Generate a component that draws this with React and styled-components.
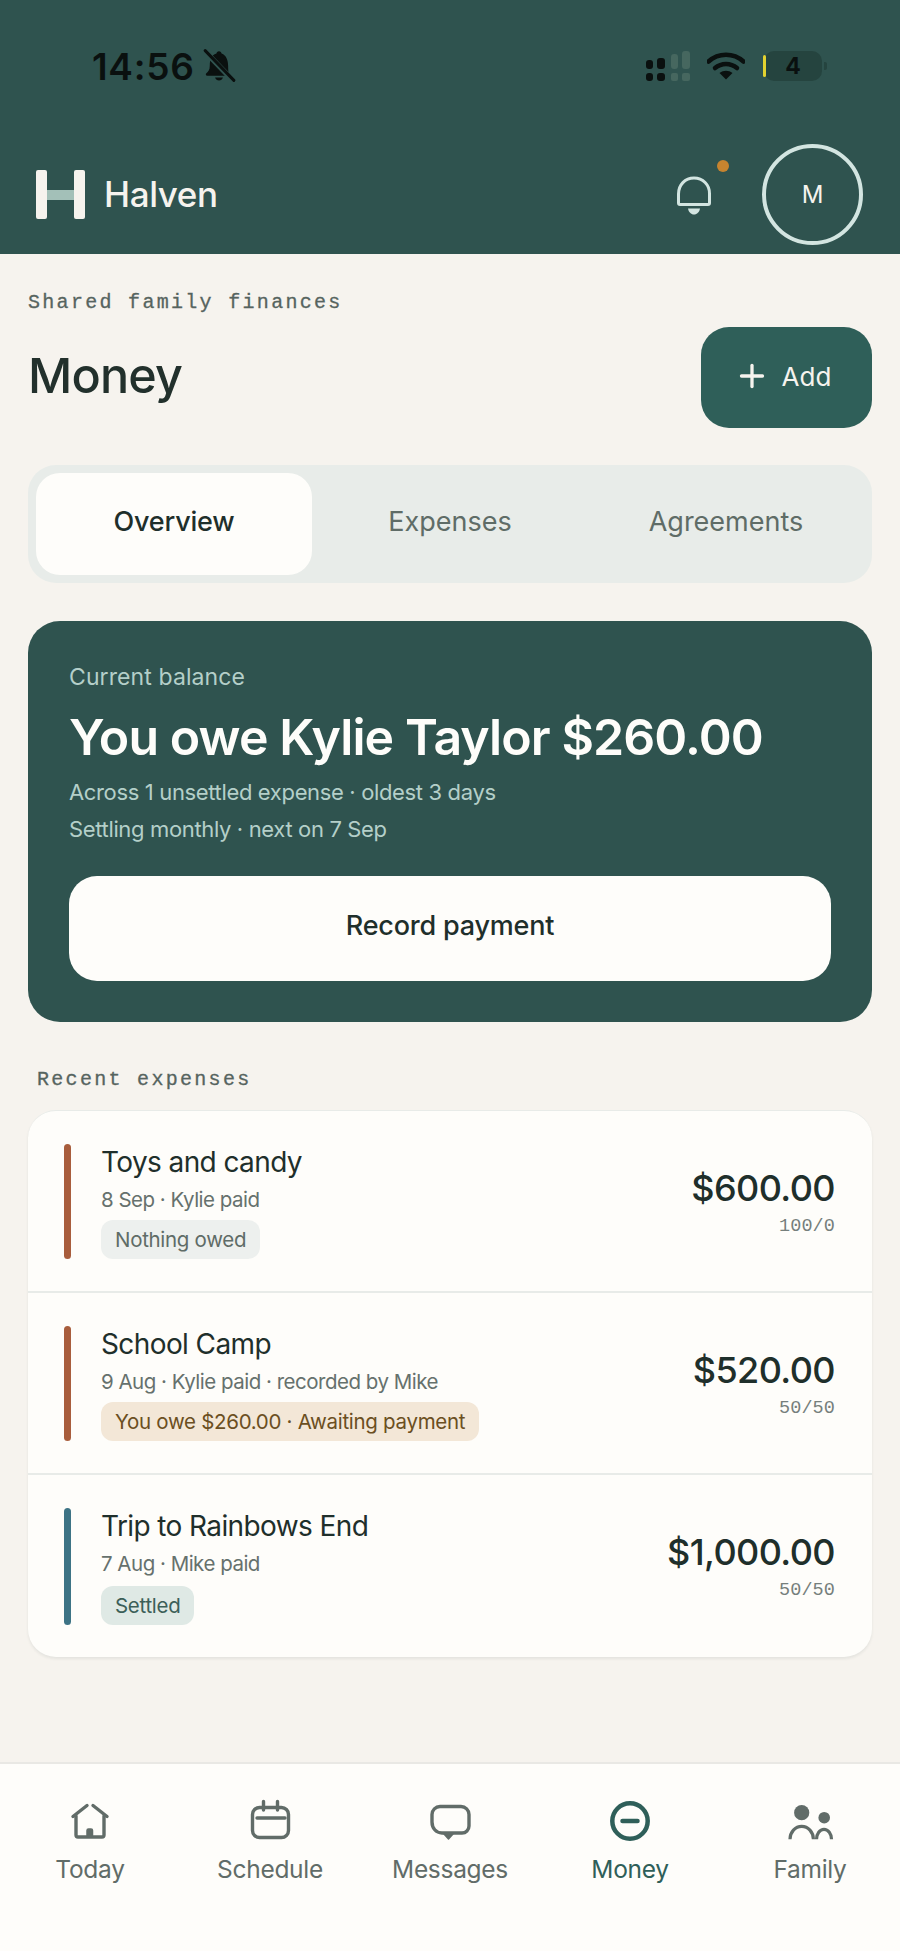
import styled, { createGlobalStyle } from "styled-components";
import { Plus } from "lucide-react";

const GlobalStyle = createGlobalStyle`
  * { box-sizing: border-box; }
  html, body { margin: 0; padding: 0; }
  body { background: #f6f3ee; font-family: Inter, "Liberation Sans", sans-serif; }
`;

const Page = styled.div`
  width: 900px;
  height: 1951px;
  display: flex;
  flex-direction: column;
  background: #f6f3ee;
  color: #1f2f2b;
  overflow: hidden;
`;

const Header = styled.header`
  height: 254px;
  flex: none;
  background: #2f534f;
  padding: 45px 37px 9px 36px;
  display: flex;
  flex-direction: column;
  justify-content: space-between;
`;

const StatusBar = styled.div`
  display: flex;
  align-items: center;
  justify-content: space-between;
  padding: 0 41px 0 56px;
  height: 42px;
`;

const StatusGroup = styled.div`
  display: flex;
  align-items: center;
  gap: ${(p) => p.$gap}px;
`;

const Clock = styled.span`
  font-size: 37px;
  font-weight: 600;
  letter-spacing: 0.7px;
  color: #0a100f;
`;

const Battery = styled.div`
  position: relative;
  width: 58px;
  height: 30px;
  margin-left: 2px;
  border-radius: 10px;
  background: #25443f;
  display: flex;
  align-items: center;
  justify-content: center;
  font-size: 23px;
  font-weight: 700;
  color: #0a100f;

  &::before {
    content: "";
    position: absolute;
    left: -1px;
    top: 4px;
    width: 3px;
    height: 22px;
    border-radius: 2px;
    background: #e3d230;
  }

  &::after {
    content: "";
    position: absolute;
    right: -5px;
    top: 11px;
    width: 3px;
    height: 8px;
    border-radius: 0 2px 2px 0;
    background: #25443f;
  }
`;

const AppBar = styled.div`
  display: flex;
  align-items: center;
  justify-content: space-between;
`;

const Brand = styled.div`
  display: flex;
  align-items: center;
  gap: 19px;
`;

const BrandName = styled.span`
  font-size: 35px;
  font-weight: 500;
  letter-spacing: -0.4px;
  padding-bottom: 2px;
  color: #f6f3ee;
`;

const AppActions = styled.div`
  display: flex;
  align-items: center;
  gap: 50px;
`;

const BellWrap = styled.div`
  position: relative;
  width: 36px;
  height: 40px;
  margin-top: 3px;
`;

const BellDot = styled.span`
  position: absolute;
  top: -16px;
  right: -17px;
  width: 12px;
  height: 12px;
  border-radius: 50%;
  background: #c6842f;
`;

const Avatar = styled.div`
  width: 101px;
  height: 101px;
  border-radius: 50%;
  border: 4px solid #d3e5e1;
  display: flex;
  align-items: center;
  justify-content: center;
  font-size: 24px;
  font-weight: 400;
  color: #f6f3ee;
`;

const Main = styled.main`
  flex: 1;
  padding: 37px 28px 0;
`;

const MonoLabel = styled.div`
  font-family: "Liberation Mono", monospace;
  font-size: 20px;
  letter-spacing: 2.3px;
  line-height: 24px;
  color: #56645f;
  -webkit-text-stroke: 0.3px #56645f;
`;

const TitleRow = styled.div`
  display: flex;
  align-items: center;
  justify-content: space-between;
  margin-top: 12px;
`;

const Title = styled.h1`
  margin: 0;
  padding-bottom: 4px;
  font-size: 48.5px;
  font-weight: 550;
  letter-spacing: -0.8px;
  color: #22302c;
`;

const AddButton = styled.button`
  width: 171px;
  height: 101px;
  border: 0;
  padding: 0 8px 3px 0;
  border-radius: 28px;
  background: #2f5f59;
  color: #f6f3ee;
  display: flex;
  align-items: center;
  justify-content: center;
  gap: 12px;
  font-family: inherit;
  font-size: 26px;
  font-weight: 400;
`;

const Tabs = styled.div`
  margin-top: 37px;
  height: 118px;
  padding: 8px;
  border-radius: 28px;
  background: #e8ece9;
  display: grid;
  grid-template-columns: repeat(3, 1fr);
`;

const Tab = styled.div`
  display: flex;
  align-items: center;
  justify-content: center;
  padding-bottom: 5px;
  border-radius: 24px;
  font-size: 27px;
  font-weight: ${(p) => (p.$active ? 500 : 400)};
  letter-spacing: ${(p) => (p.$active ? "-0.2px" : "0")};
  background: ${(p) => (p.$active ? "#fefdfa" : "transparent")};
  color: ${(p) => (p.$active ? "#1f2f2b" : "#5f6c67")};
`;

const BalanceCard = styled.section`
  margin-top: 38px;
  height: 401px;
  padding: 41px;
  border-radius: 32px;
  background: #2f534f;
  display: flex;
  flex-direction: column;
`;

const BalanceLabel = styled.div`
  font-size: 23px;
  line-height: 30px;
  letter-spacing: 0.1px;
  color: #b4cfc9;
`;

const BalanceAmount = styled.div`
  margin: 16px 0 8px;
  font-size: 50px;
  line-height: 58px;
  font-weight: 600;
  letter-spacing: -0.9px;
  color: #fefdfa;
`;

const BalanceNote = styled.div`
  font-size: 22px;
  line-height: 37px;
  letter-spacing: -0.35px;
  color: #b4cfc9;
`;

const RecordButton = styled.button`
  margin-top: auto;
  height: 105px;
  border: 0;
  padding: 0 0 6px;
  border-radius: 28px;
  background: #fefdfa;
  color: #1f2f2b;
  font-family: inherit;
  font-size: 27px;
  font-weight: 500;
  letter-spacing: -0.2px;
`;

const SectionHead = styled.div`
  margin-top: 46px;
  padding-left: 9px;
`;

const ExpenseList = styled.section`
  margin-top: 18px;
  border-radius: 28px;
  background: #fefdfa;
  border-top: 1px solid #e8ebe8;
  box-shadow: 0 2px 3px rgba(30, 50, 45, 0.08);
`;

const ExpenseRow = styled.article`
  height: 182px;
  padding: 33px 37px 32px 36px;
  display: flex;
  align-items: stretch;
  border-bottom: ${(p) => (p.$last ? "0" : "2px solid #e8ebe8")};
`;

const Accent = styled.span`
  flex: none;
  width: 7px;
  border-radius: 4px;
  background: ${(p) => p.$color};
  margin-right: 30px;
`;

const ExpenseInfo = styled.div`
  flex: 1;
  display: flex;
  flex-direction: column;
  align-items: flex-start;
`;

const ExpenseTitle = styled.div`
  font-size: 28px;
  line-height: 36px;
  letter-spacing: -0.6px;
  color: #1f2f2b;
`;

const ExpenseMeta = styled.div`
  margin-top: 5px;
  font-size: 20.5px;
  line-height: 30px;
  letter-spacing: -0.5px;
  color: #66716d;
`;

const StatusPill = styled.span`
  margin-top: auto;
  height: 39px;
  padding: 0 14px;
  border-radius: 12px;
  display: inline-flex;
  align-items: center;
  font-size: 20.5px;
  letter-spacing: -0.3px;
  background: ${(p) => p.$bg};
  color: ${(p) => p.$fg};
`;

const ExpenseSide = styled.div`
  display: flex;
  flex-direction: column;
  align-items: flex-end;
  padding-top: 22px;
`;

const Amount = styled.div`
  font-size: 36px;
  line-height: 44px;
  font-weight: 500;
  letter-spacing: -0.6px;
  color: #1f2f2b;
`;

const Split = styled.div`
  margin-top: 6px;
  font-family: "Liberation Mono", monospace;
  font-size: 18.5px;
  line-height: 22px;
  letter-spacing: 0.1px;
  color: #767f7c;
`;

const BottomNav = styled.nav`
  flex: none;
  height: 189px;
  background: #fefdfa;
  border-top: 2px solid #e9e8e4;
  padding-top: 34px;
  display: grid;
  grid-template-columns: repeat(5, 180px);
  align-content: start;
`;

const NavItem = styled.div`
  display: flex;
  flex-direction: column;
  align-items: center;
  gap: 6px;
  font-size: 24.5px;
  line-height: 34px;
  letter-spacing: -0.3px;
  color: ${(p) => (p.$active ? "#2f5f59" : "#616c68")};
`;

const NavIcon = styled.svg`
  width: 48px;
  height: 48px;
  display: block;
  fill: none;
  stroke: currentColor;
  stroke-width: ${(p) => p.$stroke || 3.4};
  stroke-linecap: round;
  stroke-linejoin: round;
`;

const MutedBell = () => (
  <svg width="34" height="34" viewBox="0 0 32 32">
    <path d="M16 2c-1.400 0-2.300.9-2.400 2.200-1.600.4-2.900 1.300-3.800 2.400L25 21.800c-.3-1.500-.4-3.400-.4-5.800 0-5-1.500-10.300-6.200-11.800C18.300 2.900 17.400 2 16 2z" fill="#0a100f" />
    <path d="M7.800 10.500c-.4 1.600-.5 3.500-.5 5.500 0 3.800-1.500 5.500-3.200 6.800-1 .8-.5 2.400.8 2.400H22z" fill="#0a100f" />
    <path d="M12.300 26.800c.5 1.700 2 2.900 3.700 2.900s3.200-1.200 3.700-2.900z" fill="#0a100f" />
    <path d="M3 2.500l26 27" stroke="#2f534f" strokeWidth="5" />
    <path d="M3 1.500l27 28" stroke="#0a100f" strokeWidth="2.800" strokeLinecap="round" />
  </svg>
);

const SignalIcon = () => (
  <svg width="44" height="32" viewBox="0 0 44 32">
    <g fill="#0a100f">
      <rect x="0" y="10" width="7" height="9" rx="3" />
      <rect x="0" y="23" width="7" height="8" rx="3" />
      <rect x="11" y="8" width="8" height="11" rx="3" />
      <rect x="11" y="23" width="8" height="8" rx="3" />
    </g>
    <g fill="#46675f">
      <rect x="25" y="4" width="7" height="15" rx="3" />
      <rect x="25" y="23" width="7" height="8" rx="2" />
      <rect x="36" y="1" width="8" height="18" rx="3" />
      <rect x="36" y="23" width="8" height="8" rx="2" />
    </g>
  </svg>
);

const WifiIcon = () => (
  <svg width="38" height="28" viewBox="0 0 38 28">
    <path d="M1.500 9.500C11.500 .5 26.500 .5 36.500 9.500" fill="none" stroke="#0a100f" strokeWidth="4.500" strokeLinecap="round" />
    <path d="M8 16c6.500-5.500 15.500-5.500 22 0" fill="none" stroke="#0a100f" strokeWidth="4.500" strokeLinecap="round" />
    <path d="M12.500 21c4-3 9-3 13 0l-6.500 6.500z" fill="#0a100f" />
  </svg>
);

const LogoMark = () => (
  <svg width="49" height="49" viewBox="0 0 49 49">
    <rect x="10" y="20" width="30" height="10" fill="#a3c0b8" />
    <rect x="0" y="0" width="11" height="49" rx="2" fill="#f6f3ee" />
    <rect x="38" y="0" width="11" height="49" rx="2" fill="#f6f3ee" />
  </svg>
);

const BellIcon = () => (
  <svg width="36" height="40" viewBox="0 0 36 40" fill="none">
    <path d="M2.500 27V18C2.500 9 9 2 18 2s15.500 7 15.500 15.500V27a1.500 1.500 0 0 1-1.500 1.500H4A1.500 1.500 0 0 1 2.500 27z" stroke="#d3e5e1" strokeWidth="3" />
    <path d="M12 32.500h12c-.6 3.500-3 6-6 6s-5.400-2.500-6-6z" fill="#d3e5e1" />
  </svg>
);

const HomeIcon = () => (
  <NavIcon viewBox="0 0 48 48">
    <path d="M7 18.500L21 7.500M41 18.500L27 7.500" />
    <path d="M10 18V37a2 2 0 0 0 2 2H36a2 2 0 0 0 2-2V18" />
    <rect x="21" y="31" width="5.500" height="8" rx="1.500" fill="currentColor" strokeWidth="1.500" />
  </NavIcon>
);

const CalendarIcon = () => (
  <NavIcon viewBox="0 0 48 48">
    <rect x="6.500" y="9.500" width="36" height="30" rx="7" />
    <path d="M11 20H39M17.500 3.500V12M31.500 3.500V12" />
  </NavIcon>
);

const MessageIcon = () => (
  <NavIcon viewBox="0 0 48 48">
    <path d="M14 8.500H35a8 8 0 0 1 8 8V28a7 7 0 0 1-7 7H27h-9h-2C10 35 6 30 6 24V16.500a8 8 0 0 1 8-8z" />
    <path d="M18 36H27L22.500 41z" fill="currentColor" strokeWidth="1.500" />
  </NavIcon>
);

const MoneyIcon = () => (
  <NavIcon viewBox="0 0 48 48" $stroke={4.500}>
    <circle cx="24" cy="23" r="17.700" />
    <path d="M16.500 23H31.500" />
  </NavIcon>
);

const FamilyIcon = () => (
  <NavIcon viewBox="0 0 48 48" $stroke={3.200}>
    <circle cx="15.700" cy="14.700" r="7.600" fill="currentColor" stroke="none" />
    <circle cx="38.200" cy="19.700" r="5.800" fill="currentColor" stroke="none" />
    <path d="M4 41.300A11.700 13 0 0 1 27.400 41.300" strokeLinecap="butt" />
    <path d="M30.500 41.300A7.500 10 0 0 1 45.500 41.300" strokeLinecap="butt" />
  </NavIcon>
);

const expenses = [
  { title: "Toys and candy", meta: "8 Sep · Kylie paid", pill: "Nothing owed", bg: "#edf0ee", fg: "#5f6c67", amount: "$600.00", split: "100/0", accent: "#a85d3c" },
  { title: "School Camp", meta: "9 Aug · Kylie paid · recorded by Mike", pill: "You owe $260.00 · Awaiting payment", bg: "#f3e7d7", fg: "#6b4f22", amount: "$520.00", split: "50/50", accent: "#a85d3c" },
  { title: "Trip to Rainbows End", meta: "7 Aug · Mike paid", pill: "Settled", bg: "#dfe9e5", fg: "#3c5f58", amount: "$1,000.00", split: "50/50", accent: "#3d7385" },
];

const navItems = [
  { label: "Today", icon: <HomeIcon /> },
  { label: "Schedule", icon: <CalendarIcon /> },
  { label: "Messages", icon: <MessageIcon /> },
  { label: "Money", icon: <MoneyIcon />, active: true },
  { label: "Family", icon: <FamilyIcon /> },
];

const App = () => {
  return (
    <Page>
      <GlobalStyle />
      <Header>
        <StatusBar>
          <StatusGroup $gap={7}>
            <Clock>14:56</Clock>
            <MutedBell />
          </StatusGroup>
          <StatusGroup $gap={17}>
            <SignalIcon />
            <WifiIcon />
            <Battery>4</Battery>
          </StatusGroup>
        </StatusBar>
        <AppBar>
          <Brand>
            <LogoMark />
            <BrandName>Halven</BrandName>
          </Brand>
          <AppActions>
            <BellWrap>
              <BellIcon />
              <BellDot />
            </BellWrap>
            <Avatar>M</Avatar>
          </AppActions>
        </AppBar>
      </Header>
      <Main>
        <MonoLabel>Shared family finances</MonoLabel>
        <TitleRow>
          <Title>Money</Title>
          <AddButton>
            <Plus size={36} strokeWidth={2.2} />
            Add
          </AddButton>
        </TitleRow>
        <Tabs>
          <Tab $active>Overview</Tab>
          <Tab>Expenses</Tab>
          <Tab>Agreements</Tab>
        </Tabs>
        <BalanceCard>
          <BalanceLabel>Current balance</BalanceLabel>
          <BalanceAmount>You owe Kylie Taylor $260.00</BalanceAmount>
          <BalanceNote>Across 1 unsettled expense · oldest 3 days</BalanceNote>
          <BalanceNote>Settling monthly · next on 7 Sep</BalanceNote>
          <RecordButton>Record payment</RecordButton>
        </BalanceCard>
        <SectionHead>
          <MonoLabel>Recent expenses</MonoLabel>
        </SectionHead>
        <ExpenseList>
          {expenses.map((item, i) => (
            <ExpenseRow key={item.title} $last={i === expenses.length - 1}>
              <Accent $color={item.accent} />
              <ExpenseInfo>
                <ExpenseTitle>{item.title}</ExpenseTitle>
                <ExpenseMeta>{item.meta}</ExpenseMeta>
                <StatusPill $bg={item.bg} $fg={item.fg}>{item.pill}</StatusPill>
              </ExpenseInfo>
              <ExpenseSide>
                <Amount>{item.amount}</Amount>
                <Split>{item.split}</Split>
              </ExpenseSide>
            </ExpenseRow>
          ))}
        </ExpenseList>
      </Main>
      <BottomNav>
        {navItems.map((item) => (
          <NavItem key={item.label} $active={item.active}>
            {item.icon}
            {item.label}
          </NavItem>
        ))}
      </BottomNav>
    </Page>
  );
};

export default App;
